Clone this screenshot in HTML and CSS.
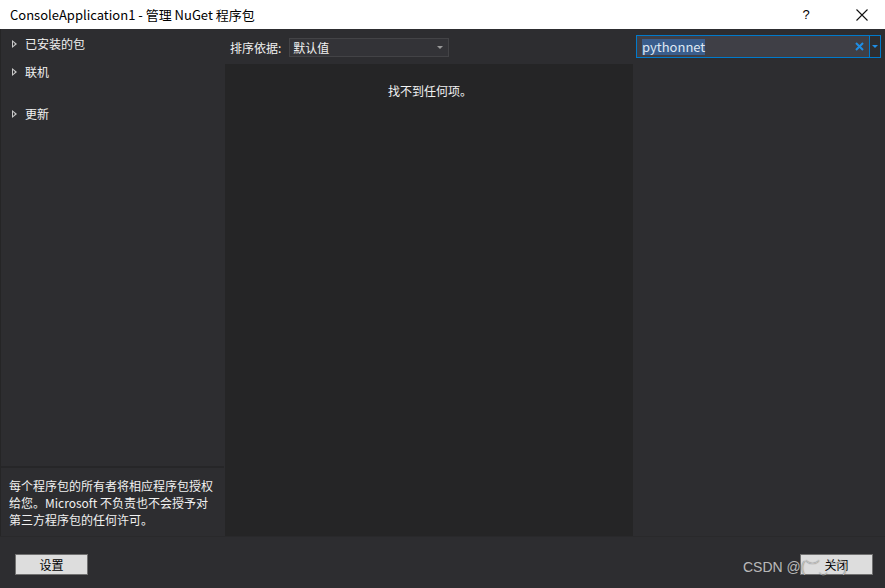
FILE: index.html
```html
<!DOCTYPE html>
<html lang="zh-CN">
<head>
<meta charset="utf-8">
<title>管理 NuGet 程序包</title>
<link rel="stylesheet" href="styles.css">
</head>
<body>
<div class="window">
  <div class="titlebar">
    <div class="title">ConsoleApplication1 - 管理 NuGet 程序包</div>
    <div class="title-btns">
      <span class="help">?</span>
      <svg class="close-x" width="12" height="12" viewBox="0 0 12 12"><path d="M0.5 0.5 L11.5 11.5 M11.5 0.5 L0.5 11.5" stroke="#111" stroke-width="1.1" fill="none"/></svg>
    </div>
  </div>
  <div class="main">
    <div class="left">
      <div class="tree">
        <div class="node"><span class="tri"></span>已安装的包</div>
        <div class="node"><span class="tri"></span>联机</div>
        <div class="node node-gap"><span class="tri"></span>更新</div>
      </div>
      <div class="note">每个程序包的所有者将相应程序包授权给您。Microsoft 不负责也不会授予对第三方程序包的任何许可。</div>
    </div>
    <div class="center">
      <div class="sortbar">
        <span class="sort-label">排序依据:</span>
        <div class="combo"><span>默认值</span><span class="combo-arrow"></span></div>
      </div>
      <div class="list">
        <div class="empty">找不到任何项。</div>
      </div>
    </div>
    <div class="right">
      <div class="searchbar">
        <div class="search">
          <div class="search-field"><span class="sel">pythonnet</span></div>
          <svg class="clear" width="9" height="9" viewBox="0 0 9 9"><path d="M1 1 L8 8 M8 1 L1 8" stroke="#1e8ee6" stroke-width="2" fill="none"/></svg>
          <div class="search-drop"><span class="drop-arrow"></span></div>
        </div>
      </div>
      <div class="details"></div>
    </div>
  </div>
  <div class="footer">
    <button class="btn">设置</button>
    <div class="footer-right">
      <button class="btn">关闭</button>
      <span class="watermark">CSDN @(︶‿︶)</span>
    </div>
  </div>
</div>
</body>
</html>
```
FILE: styles.css
```css
* { box-sizing: border-box; }
html, body { margin: 0; padding: 0; }
body {
  width: 885px;
  height: 588px;
  overflow: hidden;
  background: #2d2d30;
  font-family: "Noto Sans CJK SC", "Microsoft YaHei", sans-serif;
  font-size: 12px;
  color: #f1f1f1;
}
.window { display: flex; flex-direction: column; height: 588px; }

.titlebar {
  height: 29px;
  background: #ffffff;
  display: flex;
  align-items: center;
  justify-content: space-between;
  color: #000;
  padding-left: 10px;
}
.title { font-size: 13px; line-height: 29px; }
.title-btns { display: flex; align-items: center; height: 29px; }
.help { width: 46px; text-align: center; font-size: 13px; font-family: "Liberation Sans", sans-serif; }
.close-x { margin: 0 17px 0 27px; }

.main { display: flex; height: 507px; }

.left {
  width: 224px;
  background: #2d2d30;
  display: flex;
  flex-direction: column;
  justify-content: space-between;
  border-left: 1px solid #252526;
}
.tree { padding-top: 5px; }
.node {
  height: 20px;
  line-height: 20px;
  display: flex;
  align-items: center;
  margin-bottom: 8px;
  padding-left: 11px;
  font-size: 12px;
  color: #f1f1f1;
}
.node-gap { margin-top: 22px; }
.tri {
  width: 0; height: 0;
  border-top: 4px solid transparent;
  border-bottom: 4px solid transparent;
  border-left: 5px solid #c8c8c8;
  margin-right: 8px;
  position: relative;
}
.tri::after {
  content: "";
  position: absolute;
  left: -4px; top: -2px;
  border-top: 2px solid transparent;
  border-bottom: 2px solid transparent;
  border-left: 2px solid #2d2d30;
}
.note {
  border-top: 2px solid #262628;
  padding: 9px 6px 0 8px;
  height: 70px;
  line-height: 17px;
  font-size: 12px;
  color: #f1f1f1;
}

.center { width: 411px; margin-left: 1px; display: flex; flex-direction: column; }
.sortbar {
  height: 35px;
  display: flex;
  align-items: center;
  padding-left: 5px;
  padding-top: 1px;
}
.sort-label { margin-right: 8px; color: #f1f1f1; }
.combo {
  width: 160px;
  height: 19px;
  background: #333337;
  border: 1px solid #434346;
  display: flex;
  align-items: center;
  justify-content: space-between;
  padding: 0 5px 0 3px;
  color: #f1f1f1;
}
.combo-arrow {
  width: 0; height: 0;
  border-left: 3px solid transparent;
  border-right: 3px solid transparent;
  border-top: 3px solid #999;
}
.list {
  flex: 1;
  background: #252526;
  display: flex;
  justify-content: center;
  margin-right: 3px;
}
.empty { margin-top: 18px; color: #f1f1f1; padding-left: 2px; }

.right { flex: 1; display: flex; flex-direction: column; }
.searchbar { height: 35px; display: flex; align-items: flex-end; padding-bottom: 6px; padding-right: 4px; }
.search {
  flex: 1;
  height: 23px;
  border: 1px solid #007acc;
  background: #3f3f46;
  display: flex;
  align-items: center;
}
.search-field { flex: 1; padding-left: 5px; display: flex; align-items: center; }
.sel { background: #3a5d8c; color: #dfe8f3; line-height: 16px; font-size: 13px; font-family: "Noto Sans CJK SC", sans-serif; }
.clear { margin-right: 5px; }
.search-drop {
  width: 11px;
  height: 21px;
  border-left: 1px solid #007acc;
  display: flex;
  align-items: center;
  justify-content: center;
  background: #2d2d30;
}
.drop-arrow {
  width: 0; height: 0;
  border-left: 3px solid transparent;
  border-right: 3px solid transparent;
  border-top: 3px solid #1e8ee6;
}
.details { flex: 1; background: #2d2d30; }

.footer {
  height: 52px;
  display: flex;
  align-items: center;
  justify-content: space-between;
  padding: 0 12px 0 15px;
  background: #2d2d30;
  border-top: 1px solid #29292b;
}
.btn {
  width: 73px;
  height: 21px;
  background: #dddddd;
  border: 1px solid #707070;
  font-family: "Noto Sans CJK SC", sans-serif;
  font-size: 12px;
  color: #000;
  padding: 0;
  margin-top: 3px;
}
.footer-right { position: relative; }
.watermark {
  position: absolute;
  right: 0;
  top: 5px;
  width: 130px;
  z-index: 1;
  color: rgba(220,220,220,0.8);
  text-shadow: 0 0 1px rgba(60,60,60,0.9);
  font-family: "Liberation Sans", "Noto Sans CJK SC", sans-serif;
  font-size: 14px;
  white-space: nowrap;
  pointer-events: none;
}
```
